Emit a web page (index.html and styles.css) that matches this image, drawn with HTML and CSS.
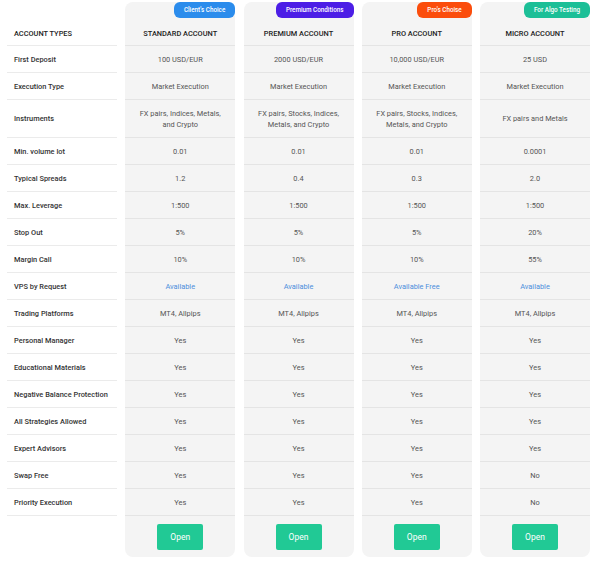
FILE: index.html
```html
<!DOCTYPE html>
<html>
<head>
<meta charset="utf-8">
<link rel="stylesheet" href="styles.css">
</head>
<body>
<div class="table">
  <div class="col labels">
    <div class="cell head">ACCOUNT TYPES</div>
    <div class="cell">First Deposit</div>
    <div class="cell">Execution Type</div>
    <div class="cell tall">Instruments</div>
    <div class="cell">Min. volume lot</div>
    <div class="cell">Typical Spreads</div>
    <div class="cell">Max. Leverage</div>
    <div class="cell">Stop Out</div>
    <div class="cell">Margin Call</div>
    <div class="cell">VPS by Request</div>
    <div class="cell">Trading Platforms</div>
    <div class="cell">Personal Manager</div>
    <div class="cell">Educational Materials</div>
    <div class="cell">Negative Balance Protection</div>
    <div class="cell">All Strategies Allowed</div>
    <div class="cell">Expert Advisors</div>
    <div class="cell">Swap Free</div>
    <div class="cell">Priority Execution</div>
  </div>

  <div class="col card">
    <span class="badge badge-blue">Client's Choice</span>
    <div class="cell head">STANDARD ACCOUNT</div>
    <div class="cell">100 USD/EUR</div>
    <div class="cell">Market Execution</div>
    <div class="cell tall">FX pairs, Indices, Metals, and Crypto</div>
    <div class="cell">0.01</div>
    <div class="cell">1.2</div>
    <div class="cell">1:500</div>
    <div class="cell">5%</div>
    <div class="cell">10%</div>
    <div class="cell link">Available</div>
    <div class="cell">MT4, Allpips</div>
    <div class="cell">Yes</div>
    <div class="cell">Yes</div>
    <div class="cell">Yes</div>
    <div class="cell">Yes</div>
    <div class="cell">Yes</div>
    <div class="cell">Yes</div>
    <div class="cell">Yes</div>
    <div class="foot"><a class="btn">Open</a></div>
  </div>

  <div class="col card">
    <span class="badge badge-purple">Premium Conditions</span>
    <div class="cell head">PREMIUM ACCOUNT</div>
    <div class="cell">2000 USD/EUR</div>
    <div class="cell">Market Execution</div>
    <div class="cell tall">FX pairs, Stocks, Indices, Metals, and Crypto</div>
    <div class="cell">0.01</div>
    <div class="cell">0.4</div>
    <div class="cell">1:500</div>
    <div class="cell">5%</div>
    <div class="cell">10%</div>
    <div class="cell link">Available</div>
    <div class="cell">MT4, Allpips</div>
    <div class="cell">Yes</div>
    <div class="cell">Yes</div>
    <div class="cell">Yes</div>
    <div class="cell">Yes</div>
    <div class="cell">Yes</div>
    <div class="cell">Yes</div>
    <div class="cell">Yes</div>
    <div class="foot"><a class="btn">Open</a></div>
  </div>

  <div class="col card">
    <span class="badge badge-orange">Pro's Choise</span>
    <div class="cell head">PRO ACCOUNT</div>
    <div class="cell">10,000 USD/EUR</div>
    <div class="cell">Market Execution</div>
    <div class="cell tall">FX pairs, Stocks, Indices, Metals, and Crypto</div>
    <div class="cell">0.01</div>
    <div class="cell">0.3</div>
    <div class="cell">1:500</div>
    <div class="cell">5%</div>
    <div class="cell">10%</div>
    <div class="cell link">Available Free</div>
    <div class="cell">MT4, Allpips</div>
    <div class="cell">Yes</div>
    <div class="cell">Yes</div>
    <div class="cell">Yes</div>
    <div class="cell">Yes</div>
    <div class="cell">Yes</div>
    <div class="cell">Yes</div>
    <div class="cell">Yes</div>
    <div class="foot"><a class="btn">Open</a></div>
  </div>

  <div class="col card">
    <span class="badge badge-teal">For Algo Testing</span>
    <div class="cell head">MICRO ACCOUNT</div>
    <div class="cell">25 USD</div>
    <div class="cell">Market Execution</div>
    <div class="cell tall">FX pairs and Metals</div>
    <div class="cell">0.0001</div>
    <div class="cell">2.0</div>
    <div class="cell">1:500</div>
    <div class="cell">20%</div>
    <div class="cell">55%</div>
    <div class="cell link">Available</div>
    <div class="cell">MT4, Allpips</div>
    <div class="cell">Yes</div>
    <div class="cell">Yes</div>
    <div class="cell">Yes</div>
    <div class="cell">Yes</div>
    <div class="cell">Yes</div>
    <div class="cell">No</div>
    <div class="cell">No</div>
    <div class="foot"><a class="btn">Open</a></div>
  </div>
</div>
</body>
</html>
```

FILE: styles.css
```css
html, body {
  margin: 0;
  padding: 0;
  background: #ffffff;
}
body {
  font-family: Roboto, "Liberation Sans", Arial, sans-serif;
  font-size: 7.4px;
  color: #555;
}
.table {
  display: flex;
  align-items: flex-start;
  gap: 8.25px;
  padding: 2px 0 0 7px;
}
.col {
  width: 110px;
  display: flex;
  flex-direction: column;
  flex: none;
}
.cell {
  height: 26px;
  border-bottom: 1px solid #e6e6e6;
  display: flex;
  align-items: center;
  justify-content: center;
  text-align: center;
  line-height: 11px;
  padding: 0 8px;
}
.cell.tall {
  height: 37px;
}
.cell.head {
  height: 44px;
  align-items: flex-end;
  box-sizing: border-box;
  padding-top: 0;
  padding-bottom: 6px;
  font-weight: 500;
  color: #222;
}
.labels .cell {
  justify-content: flex-start;
  text-align: left;
  padding: 0 7px;
  font-weight: 500;
  color: #333;
  border-bottom-color: #ebebeb;
  white-space: nowrap;
}
.labels .cell.head {
  padding-bottom: 6px;
  color: #222;
}
.card {
  position: relative;
  background: #f4f4f4;
  border-radius: 8px;
}
.card .cell {
  border-bottom-color: #e4e4e4;
}
.link {
  color: #4d8fdc;
}
.badge {
  position: absolute;
  top: 0;
  right: 0;
  height: 16px;
  padding: 0 10px;
  border-radius: 6px;
  color: #fff;
  font-size: 6.3px;
  font-weight: 500;
  line-height: 16px;
  white-space: nowrap;
}
.badge-blue { background: #2b8cec; }
.badge-purple { background: #4c1ee6; }
.badge-orange { background: #fb4d0c; }
.badge-teal { background: #1cbf97; }
.foot {
  height: 41px;
  display: flex;
  justify-content: center;
  align-items: flex-start;
  padding-top: 8px;
  box-sizing: border-box;
}
.btn {
  width: 46px;
  height: 26px;
  background: #21c995;
  color: #fff;
  border-radius: 2px;
  display: flex;
  align-items: center;
  justify-content: center;
  font-size: 8.5px;
}
```
